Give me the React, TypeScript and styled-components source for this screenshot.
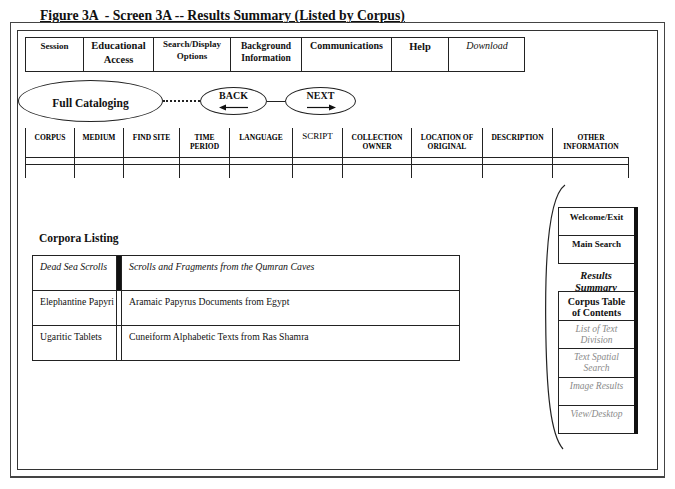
import React from "react";
import styled, { createGlobalStyle } from "styled-components";

const GlobalStyle = createGlobalStyle`
  html, body { margin: 0; padding: 0; background: #fff; }
  body { font-family: "Liberation Serif", "Times New Roman", serif; color: #111; }
  * { box-sizing: border-box; }
`;

const Page = styled.div`
  width: 675px;
  height: 489px;
  overflow: hidden;
  background: #fff;
`;

const Title = styled.h1`
  margin: 0 0 0 40px;
  padding-top: 8px;
  height: 22px;
  font-size: 13.7px;
  line-height: 16px;
  font-weight: bold;
  text-decoration: underline;
  text-underline-offset: 1px;
  white-space: pre;
`;

const OuterFrame = styled.div`
  margin-left: 10px;
  width: 655px;
  height: 456px;
  border: 1px solid #444;
  border-bottom: 2px solid #444;
  padding: 7px 6px 6px 6px;
`;

const InnerFrame = styled.div`
  height: 100%;
  border: 1px solid #333;
  padding-top: 6px;
  display: flex;
  flex-direction: column;
`;

const NavBar = styled.nav`
  margin-left: 7px;
  display: grid;
  grid-template-columns: 57px 70px 77px 71px 90px 57px 77px;
  width: 500px;
  height: 35px;
  border: 1px solid #222;
`;

const NavCell = styled.div<{ $size: number; $pt: number; $lh: number; $italic?: boolean }>`
  border-left: 1px solid #222;
  &:first-child { border-left: none; }
  padding-top: ${(p) => p.$pt}px;
  text-align: center;
  font-size: ${(p) => p.$size}px;
  line-height: ${(p) => p.$lh}px;
  font-weight: ${(p) => (p.$italic ? "normal" : "bold")};
  font-style: ${(p) => (p.$italic ? "italic" : "normal")};
`;

const OvalRow = styled.div`
  margin-top: 8px;
  height: 42px;
  display: flex;
  align-items: center;
`;

const BigOval = styled.div`
  width: 145px;
  height: 42px;
  border: 1px solid #222;
  border-radius: 50%;
  display: flex;
  align-items: center;
  justify-content: center;
  font-size: 11.5px;
  font-weight: bold;
  padding-top: 3px;
`;

const Connector = styled.div<{ $w: number; $dotted?: boolean }>`
  width: ${(p) => p.$w}px;
  border-top: ${(p) => (p.$dotted ? "2px dotted #222" : "1px solid #222")};
`;

const NavOval = styled.div<{ $w: number }>`
  width: ${(p) => p.$w}px;
  height: 28px;
  border: 1px solid #222;
  border-radius: 50%;
  display: flex;
  flex-direction: column;
  align-items: center;
  padding-top: 2px;
  font-size: 10px;
  font-weight: bold;
  line-height: 11px;
`;

const ArrowSvg = styled.svg`
  display: block;
  margin-top: 3px;
`;

const HeaderGrid = styled.div`
  margin-top: 6px;
  margin-left: 7px;
  display: grid;
  grid-template-rows: 29px 8px 13px;
  width: 605px;
`;

const HeadCell = styled.div<{ $plain?: boolean }>`
  border-left: 1px solid #222;
  padding-top: ${(p) => (p.$plain ? 4 : 5)}px;
  text-align: center;
  font-size: ${(p) => (p.$plain ? 9 : 7.5)}px;
  line-height: 9px;
  font-weight: ${(p) => (p.$plain ? "normal" : "bold")};
  color: #000;
  &:last-child { border-right: 1px solid #222; }
`;

const BandCell = styled.div<{ $last?: boolean }>`
  border-left: 1px solid #222;
  border-top: 1px solid #222;
  border-bottom: 1px solid #222;
  border-right: ${(p) => (p.$last ? "1px solid #222" : "none")};
`;

const BodyCell = styled.div<{ $last?: boolean }>`
  border-left: 1px solid #222;
  border-right: ${(p) => (p.$last ? "1px solid #222" : "none")};
`;

const Lower = styled.div`
  display: flex;
  align-items: flex-start;
  flex: 1;
`;

const ListingColumn = styled.section`
  margin-left: 14px;
  margin-top: 53px;
  width: 428px;
`;

const ListingTitle = styled.h2`
  margin: 0 0 10px 7px;
  font-size: 11.5px;
  line-height: 14px;
  font-weight: bold;
`;

const CorpusTable = styled.div`
  border: 1px solid #222;
`;

const CorpusRow = styled.div`
  display: grid;
  grid-template-columns: 83px 6px 1fr;
  height: 34px;
  & + & {
    border-top: 1px solid #222;
    height: 35px;
  }
`;

const CorpusCell = styled.div<{ $italic?: boolean }>`
  padding: 5px 0 0 7px;
  font-size: ${(p) => (p.$italic ? 9.8 : 9.7)}px;
  line-height: 12px;
  font-style: ${(p) => (p.$italic ? "italic" : "normal")};
  white-space: nowrap;
  overflow: hidden;
`;

const Divider = styled.div<{ $filled?: boolean }>`
  background: ${(p) => (p.$filled ? "#111" : "#fff")};
  border-left: 1px solid #222;
  border-right: 1px solid #222;
`;

const SideWrap = styled.aside`
  margin-left: auto;
  margin-right: 19px;
  margin-top: 7px;
  display: flex;
  align-items: flex-start;
`;

const Bracket = styled.svg`
  display: block;
  overflow: visible;
  flex: none;
`;

const Panel = styled.div`
  margin-top: 22px;
  width: 80px;
  border-right: 4px solid #111;
  display: flex;
  flex-direction: column;
`;

const PanelItem = styled.div<{
  $h: number;
  $pt: number;
  $variant: "bold" | "grey" | "current" | "toc";
  $last?: boolean;
}>`
  height: ${(p) => p.$h}px;
  border-top: 1px solid #222;
  border-left: ${(p) => (p.$variant === "current" ? "none" : "1px solid #222")};
  border-bottom: ${(p) => (p.$last ? "1px solid #222" : "none")};
  padding-top: ${(p) => p.$pt}px;
  text-align: center;
  overflow: hidden;
  font-size: ${(p) =>
    p.$variant === "bold" ? 9 : p.$variant === "grey" ? 9.5 : p.$variant === "toc" ? 10 : 10.5}px;
  line-height: ${(p) => (p.$variant === "current" ? 12 : 11)}px;
  font-weight: ${(p) => (p.$variant === "grey" ? "normal" : "bold")};
  font-style: ${(p) => (p.$variant === "grey" || p.$variant === "current" ? "italic" : "normal")};
  color: ${(p) => (p.$variant === "grey" ? "#8a8a8a" : "#111")};
`;

const navItems = [
  { label: ["Session"], size: 9, pt: 3, lh: 11 },
  { label: ["Educational", "Access"], size: 10.5, pt: 1, lh: 14 },
  { label: ["Search/Display", "Options"], size: 9, pt: 0, lh: 12 },
  { label: ["Background", "Information"], size: 9.5, pt: 2, lh: 12 },
  { label: ["Communications"], size: 10, pt: 2, lh: 12 },
  { label: ["Help"], size: 10.5, pt: 3, lh: 12 },
  { label: ["Download"], size: 10, pt: 2, lh: 12, italic: true },
];

const columns: { label: string[]; w: number; plain?: boolean }[] = [
  { label: ["CORPUS"], w: 49 },
  { label: ["MEDIUM"], w: 49 },
  { label: ["FIND SITE"], w: 56 },
  { label: ["TIME", "PERIOD"], w: 50 },
  { label: ["LANGUAGE"], w: 63 },
  { label: ["SCRIPT"], w: 50, plain: true },
  { label: ["COLLECTION", "OWNER"], w: 69 },
  { label: ["LOCATION OF", "ORIGINAL"], w: 71 },
  { label: ["DESCRIPTION"], w: 70 },
  { label: ["OTHER", "INFORMATION"], w: 77 },
];

const corpora = [
  { name: "Dead Sea Scrolls", desc: "Scrolls and Fragments from the Qumran Caves", italic: true },
  { name: "Elephantine Papyri", desc: "Aramaic Papyrus Documents from Egypt" },
  { name: "Ugaritic Tablets", desc: "Cuneiform Alphabetic Texts from Ras Shamra" },
];

const panelItems: {
  label: string[];
  h: number;
  pt: number;
  variant: "bold" | "grey" | "current" | "toc";
}[] = [
  { label: ["Welcome/Exit"], h: 28, pt: 4, variant: "bold" },
  { label: ["Main Search"], h: 28, pt: 3, variant: "bold" },
  { label: ["Results", "Summary"], h: 28, pt: 6, variant: "current" },
  { label: ["Corpus Table", "of Contents"], h: 29, pt: 4, variant: "toc" },
  { label: ["List of Text", "Division"], h: 28, pt: 3, variant: "grey" },
  { label: ["Text Spatial", "Search"], h: 29, pt: 3, variant: "grey" },
  { label: ["Image Results"], h: 28, pt: 3, variant: "grey" },
  { label: ["View/Desktop"], h: 29, pt: 3, variant: "grey" },
];

const Lines = ({ lines }: { lines: string[] }) => (
  <>
    {lines.map((l, i) => (
      <div key={i}>{l}</div>
    ))}
  </>
);

const Arrow = ({ dir }: { dir: "left" | "right" }) => (
  <ArrowSvg width="30" height="7" viewBox="0 0 30 7">
    {dir === "left" ? (
      <>
        <line x1="5" y1="3.5" x2="29" y2="3.5" stroke="#111" strokeWidth="1.2" />
        <polygon points="0,3.5 7,0.5 7,6.5" fill="#111" />
      </>
    ) : (
      <>
        <line x1="1" y1="3.5" x2="25" y2="3.5" stroke="#111" strokeWidth="1.2" />
        <polygon points="30,3.5 23,0.5 23,6.5" fill="#111" />
      </>
    )}
  </ArrowSvg>
);

export default function App() {
  const template = columns.map((c) => `${c.w}px`).join(" ");
  return (
    <Page>
      <GlobalStyle />
      <Title>{"Figure 3A  - Screen 3A -- Results Summary (Listed by Corpus)"}</Title>
      <OuterFrame>
        <InnerFrame>
          <NavBar>
            {navItems.map((n, i) => (
              <NavCell key={i} $size={n.size} $pt={n.pt} $lh={n.lh} $italic={n.italic}>
                <Lines lines={n.label} />
              </NavCell>
            ))}
          </NavBar>

          <OvalRow>
            <BigOval>Full Cataloging</BigOval>
            <Connector $w={37} $dotted />
            <NavOval $w={67}>
              <span>BACK</span>
              <Arrow dir="left" />
            </NavOval>
            <Connector $w={18} />
            <NavOval $w={71}>
              <span>NEXT</span>
              <Arrow dir="right" />
            </NavOval>
          </OvalRow>

          <HeaderGrid style={{ gridTemplateColumns: template }}>
            {columns.map((c, i) => (
              <HeadCell key={`h${i}`} $plain={c.plain}>
                <Lines lines={c.label} />
              </HeadCell>
            ))}
            {columns.map((c, i) => (
              <BandCell key={`b${i}`} $last={i === columns.length - 1} />
            ))}
            {columns.map((c, i) => (
              <BodyCell key={`r${i}`} $last={i === columns.length - 1} />
            ))}
          </HeaderGrid>

          <Lower>
            <ListingColumn>
              <ListingTitle>Corpora Listing</ListingTitle>
              <CorpusTable>
                {corpora.map((c, i) => (
                  <CorpusRow key={i}>
                    <CorpusCell $italic={c.italic}>{c.name}</CorpusCell>
                    <Divider $filled={i === 0} />
                    <CorpusCell $italic={c.italic}>{c.desc}</CorpusCell>
                  </CorpusRow>
                ))}
              </CorpusTable>
            </ListingColumn>

            <SideWrap>
              <Bracket width="13" height="264" viewBox="0 0 13 264">
                <path
                  d="M20 0 C 6 10, 0 60, 0.7 135 C 1.2 210, 6 250, 18 264"
                  fill="none"
                  stroke="#222"
                  strokeWidth="1.2"
                />
              </Bracket>
              <Panel>
                {panelItems.map((p, i) => (
                  <PanelItem
                    key={i}
                    $h={p.h}
                    $pt={p.pt}
                    $variant={p.variant}
                    $last={i === panelItems.length - 1}
                  >
                    <Lines lines={p.label} />
                  </PanelItem>
                ))}
              </Panel>
            </SideWrap>
          </Lower>
        </InnerFrame>
      </OuterFrame>
    </Page>
  );
}
